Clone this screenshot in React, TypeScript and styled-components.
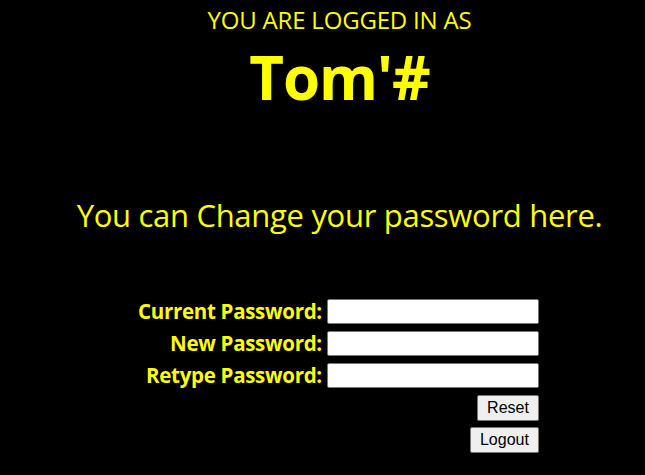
import React from "react";
import styled, { createGlobalStyle } from "styled-components";

const GlobalStyle = createGlobalStyle`
  html, body {
    margin: 0;
    padding: 0;
    background: #000;
  }
  body {
    font-family: "Open Sans", "Noto Sans", sans-serif;
    color: #ffff00;
  }
`;

const Page = styled.div`
  width: 645px;
  height: 475px;
  overflow: hidden;
  box-sizing: border-box;
  padding-left: 34px;
  display: flex;
  flex-direction: column;
  align-items: center;
`;

const Caption = styled.div`
  margin-top: 3px;
  font-size: 24px;
  line-height: 33px;
  letter-spacing: -0.2px;
`;

const UserName = styled.h1`
  margin: 0;
  font-size: 60px;
  line-height: 82px;
  font-weight: 700;
  letter-spacing: -1px;
`;

const Intro = styled.h2`
  margin: 76px 0 0;
  font-size: 31px;
  line-height: 42px;
  font-weight: 400;
  letter-spacing: -0.3px;
`;

const Form = styled.form`
  align-self: flex-start;
  margin-top: 63px;
  margin-left: 104px;
  display: grid;
  grid-template-columns: auto 212px;
  column-gap: 5px;
  row-gap: 7px;
  align-items: center;
`;

const Label = styled.label`
  text-align: right;
  font-size: 20.5px;
  font-weight: 700;
  letter-spacing: -0.3px;
  line-height: 25px;
  white-space: nowrap;
`;

const Field = styled.input`
  box-sizing: border-box;
  width: 212px;
  height: 25px;
  margin: 0;
  border: 1px solid #767676;
  border-radius: 2px;
  background: #fff;
`;

const Actions = styled.div`
  grid-column: 2;
  display: flex;
  flex-direction: column;
  align-items: flex-end;
  gap: 6px;
`;

const Button = styled.button`
  box-sizing: border-box;
  height: 26px;
  padding: 0 9px;
  font-family: "Liberation Sans", Arial, sans-serif;
  font-size: 16px;
  color: #000;
  background: #efefef;
  border: 1px solid #767676;
  border-radius: 2px;
`;

export default function App() {
  return (
    <>
      <GlobalStyle />
      <Page>
        <Caption>YOU ARE LOGGED IN AS</Caption>
        <UserName>Tom'#</UserName>
        <Intro>You can Change your password here.</Intro>
        <Form onSubmit={(e) => e.preventDefault()}>
          <Label htmlFor="cur">Current Password:</Label>
          <Field id="cur" type="password" />
          <Label htmlFor="new">New Password:</Label>
          <Field id="new" type="password" />
          <Label htmlFor="re">Retype Password:</Label>
          <Field id="re" type="password" />
          <Actions>
            <Button type="reset">Reset</Button>
            <Button type="button">Logout</Button>
          </Actions>
        </Form>
      </Page>
    </>
  );
}
